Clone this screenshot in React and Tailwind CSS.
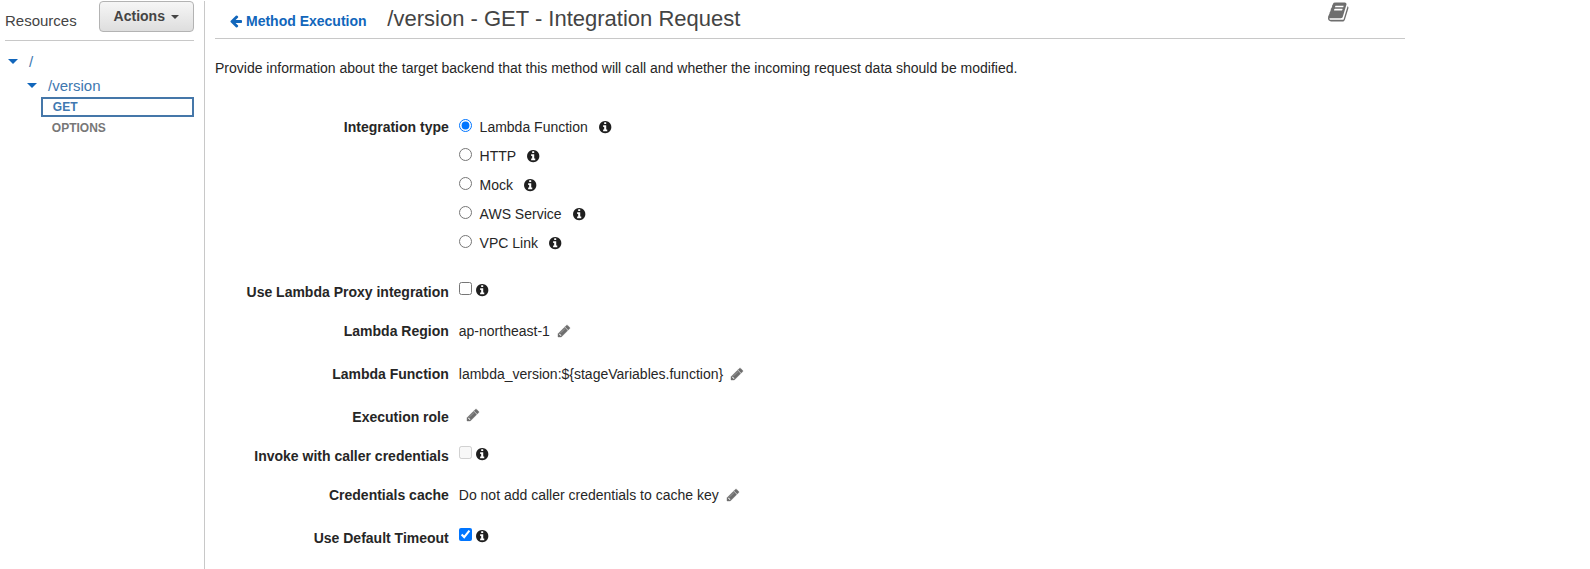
import React from 'react';

const PATHS = {
  info: 'M1152 1376v-160q0-14-9-23t-23-9h-96v-512q0-14-9-23t-23-9h-320q-14 0-23 9t-9 23v160q0 14 9 23t23 9h96v320h-96q-14 0-23 9t-9 23v160q0 14 9 23t23 9h448q14 0 23-9t9-23zm-128-896v-160q0-14-9-23t-23-9h-192q-14 0-23 9t-9 23v160q0 14 9 23t23 9h192q14 0 23-9t9-23zm640 416q0 209-103 385.5t-279.5 279.5-385.5 103-385.5-103-279.5-279.5-103-385.5 103-385.5 279.5-279.5 385.5-103 385.5 103 279.5 279.5 103 385.5z',
  pencil: 'M491 1536l91-91-235-235-91 91v107h128v128h107zm523-928q0-22-22-22-10 0-17 7l-542 542q-7 7-7 17 0 22 22 22 10 0 17-7l542-542q7-7 7-17zm-54-192l416 416-832 832h-416v-416zm683 96q0 53-37 90l-166 166-416-416 166-165q36-38 90-38 53 0 91 38l235 234q37 39 37 91z',
  book: 'M1639 478q40 57 18 129l-275 906q-19 64-76.5 107.5t-122.5 43.5h-923q-77 0-148.5-53.5t-99.5-131.5q-24-67-2-127 0-4 3-27t4-37q1-8-3-21.5t-3-19.5q2-11 8-21t16.5-23.5 16.5-23.5q23-38 45-91.5t30-91.5q3-10 .5-30t-.5-28q3-11 17-28t17-23q21-36 42-92t25-90q1-9-2.5-32t.5-28q4-13 22-30.5t22-22.5q19-26 42.5-84.5t27.5-96.5q1-8-3-25.5t-2-26.5q2-8 9-18t18-23 17-21q8-12 16.5-30.5t15-35 16-36 19.5-32 26.5-23.5 36-11.5 47.5 5.5l-1 3q38-9 51-9h761q74 0 114 56t18 130l-274 906q-36 119-71.5 153.5t-128.5 34.5h-869q-27 0-38 15-11 16-1 43 24 70 144 70h923q29 0 56-15.5t35-41.5l300-987q7-22 5-57 38 15 59 43zm-1064 2q-4 13 2 22.5t20 9.5h608q13 0 25.5-9.5t16.5-22.5l21-64q4-13-2-22.5t-20-9.5h-608q-13 0-25.5 9.5t-16.5 22.5zm-83 256q-4 13 2 22.5t20 9.5h608q13 0 25.5-9.5t16.5-22.5l21-64q4-13-2-22.5t-20-9.5h-608q-13 0-25.5 9.5t-16.5 22.5z',
  arrow: 'M1664 896v128q0 53-32.5 90.5t-84.5 37.5h-704l293 294q38 36 38 90t-38 90l-75 76q-37 37-90 37-52 0-91-37l-651-652q-37-37-37-90 0-52 37-91l651-650q38-38 91-38 52 0 90 38l75 74q38 38 38 91t-38 91l-293 293h704q52 0 84.5 37.5t32.5 90.5z',
};

function Icon({ name, className }) {
  return (
    <svg viewBox="0 0 1792 1792" fill="currentColor" className={`shrink-0 ${className}`}>
      <path d={PATHS[name]} />
    </svg>
  );
}

const Info = ({ className = '' }) => <Icon name="info" className={`size-[14.4px] text-[#1f1f1f] ${className}`} />;
const Pencil = ({ className = '' }) => (
  <Icon name="pencil" className={`size-3.5 stroke-current stroke-[50px] text-[#6e6e6e] ${className}`} />
);

function Row({ label, className, children }) {
  return (
    <div className={`flex h-5 ${className}`}>
      <div className="w-[233.8px] shrink-0 text-right font-bold">{label}</div>
      <div className="ml-[10px] flex items-start">{children}</div>
    </div>
  );
}

function Check(props) {
  return (
    <>
      <input type="checkbox" className="m-0 block size-[13px]" {...props} />
      <Info className="ml-[3px] mt-[0.8px]" />
    </>
  );
}

const TYPES = ['Lambda Function', 'HTTP', 'Mock', 'AWS Service', 'VPC Link'];

function Caret({ className }) {
  return (
    <svg viewBox="0 0 10 5" fill="currentColor" className={`shrink-0 ${className}`}>
      <path d="M0 0h10L5 5z" />
    </svg>
  );
}

function Sidebar() {
  return (
    <aside className="mt-px w-[205px] shrink-0 border-r border-[#c8c8c8] pl-[5px] text-[15px] leading-5">
      <div className="flex h-10 w-[189px] justify-between border-b border-[#c8c8c8]">
        <span className="mt-[10px] text-[#444]">Resources</span>
        <button className="flex h-[31px] w-[95px] items-center rounded-[4px] border border-[#b3b3b3] bg-linear-to-b from-[#f6f6f6] to-[#dedede] pb-px pl-[13.6px] text-sm font-bold text-[#444]">
          Actions
          <Caret className="ml-[6px] mt-px h-1 w-2" />
        </button>
      </div>
      <div className="mt-[11px] flex items-center text-[#4078b0]">
        <Caret className="mb-px ml-[3px] h-[5px] w-[10px] text-[#1166bb]" />
        <span className="ml-[11px]">/</span>
      </div>
      <div className="mt-1 flex items-center text-[#4078b0]">
        <Caret className="mb-px ml-[22px] h-[5px] w-[10px] text-[#1166bb]" />
        <span className="ml-[11px]">/version</span>
      </div>
      <div className="ml-9 mt-px flex h-5 w-[153px] items-center border-2 border-[#4577a9] pl-[9.8px] text-xs font-bold text-[#4078b0]">
        GET
      </div>
      <div className="ml-[46.8px] mt-px text-xs font-bold leading-5 text-[#777]">OPTIONS</div>
    </aside>
  );
}

export default function App() {
  return (
    <div className="flex h-[569px] overflow-hidden bg-white font-['Liberation_Sans',Arial,sans-serif] text-[#262626]">
      <Sidebar />
      <main className="ml-[10px] w-[1190px] text-sm leading-5">
        <header className="flex h-[39px] border-b border-[#c8c8c8]">
          <a className="ml-[14px] mt-[11px] flex font-bold text-[#1166bb]">
            <Icon name="arrow" className="mt-[3px] size-3.5" />
            <span className="ml-[3px]">Method Execution</span>
          </a>
          <h1 className="ml-[20.8px] mt-[5px] text-[22px] leading-7 text-[#444]">/version - GET - Integration Request</h1>
          <Icon name="book" className="ml-auto mr-[55.5px] mt-[1px] size-[22px] text-[#6e6e6e]" />
        </header>
        <p className="mt-[19px]">
          Provide information about the target backend that this method will call and whether the incoming request data
          should be modified.
        </p>

        <div className="mt-[39px] flex flex-col gap-[9px]">
          {TYPES.map((type, i) => (
            <Row key={type} label={i === 0 ? 'Integration type' : ''} className="">
              <input type="radio" name="type" defaultChecked={i === 0} className="m-0 mt-[2px] block size-[13px]" />
              <span className="ml-[7.8px]">{type}</span>
              <Info className="ml-[10px] mt-[2.8px]" />
            </Row>
          ))}
        </div>

        <Row label="Use Lambda Proxy integration" className="mt-[29px]">
          <Check />
        </Row>
        <Row label="Lambda Region" className="mt-[19px]">
          ap-northeast-1
          <Pencil className="ml-[7px] mt-[3px]" />
        </Row>
        <Row label="Lambda Function" className="mt-[23px]">
          {'lambda_version:${stageVariables.function}'}
          <Pencil className="ml-[7px] mt-[3px]" />
        </Row>
        <Row label="Execution role" className="mt-[23px]">
          <Pencil className="ml-[7px] mt-px" />
        </Row>
        <Row label="Invoke with caller credentials" className="mt-[19px]">
          <Check disabled />
        </Row>
        <Row label="Credentials cache" className="mt-[19px]">
          Do not add caller credentials to cache key
          <Pencil className="ml-[7px] mt-[3px]" />
        </Row>
        <Row label="Use Default Timeout" className="mt-[23px]">
          <Check defaultChecked />
        </Row>
      </main>
    </div>
  );
}
